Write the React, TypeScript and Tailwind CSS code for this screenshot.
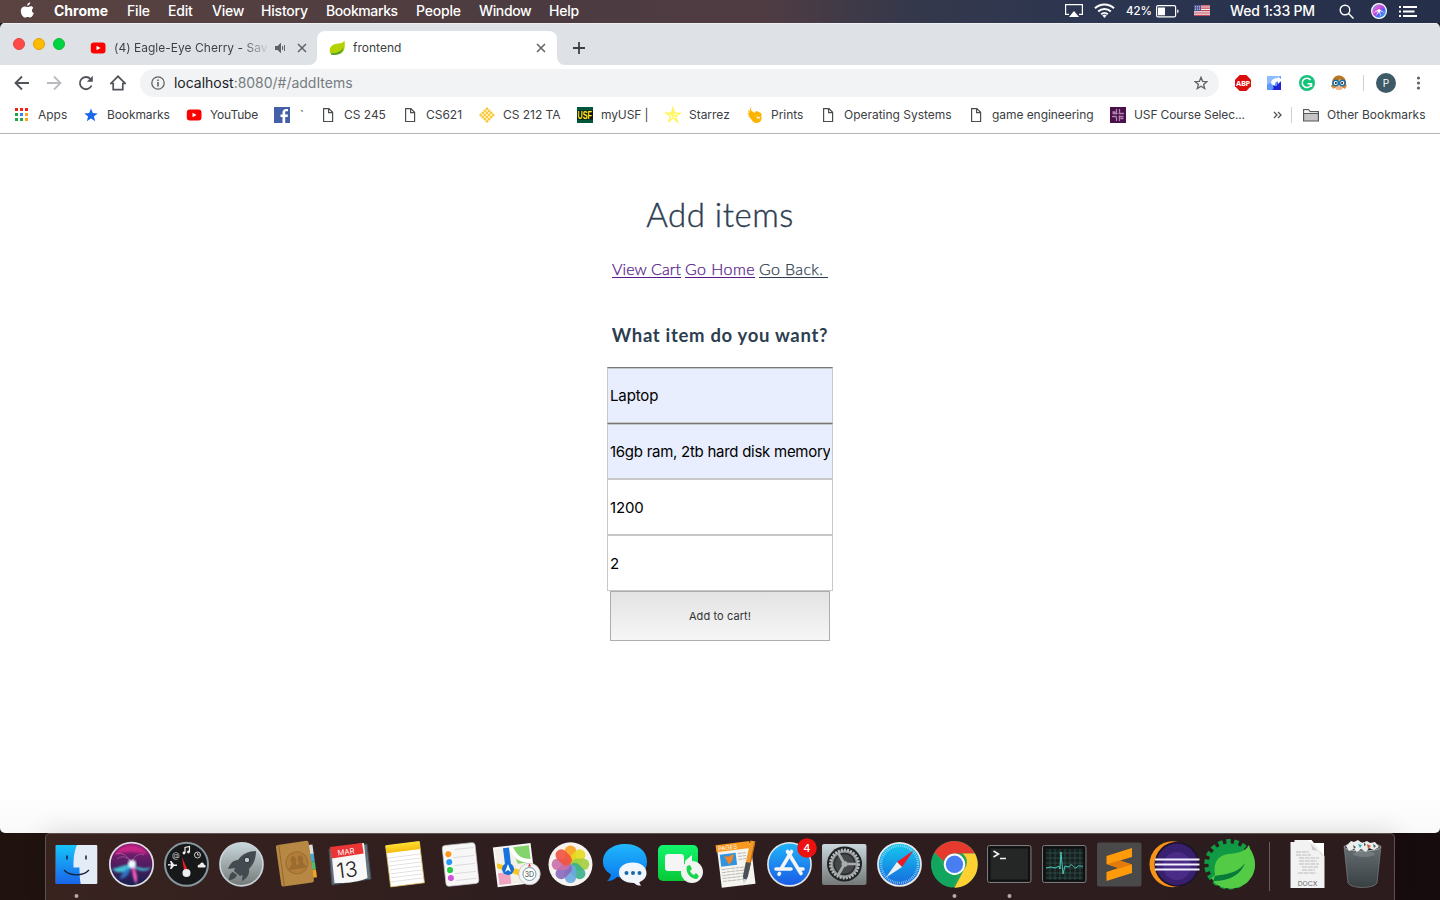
import type { ReactNode } from "react";

const menus = [
  { t: "Chrome", c: "w-[73px] font-bold tracking-[0px]" },
  { t: "File", c: "w-[41px]" },
  { t: "Edit", c: "w-[44px]" },
  { t: "View", c: "w-[49px]" },
  { t: "History", c: "w-[65px]" },
  { t: "Bookmarks", c: "w-[90px] tracking-[-0.4px]" },
  { t: "People", c: "w-[63px]" },
  { t: "Window", c: "w-[70px] tracking-[-0.35px]" },
  { t: "Help", c: "w-[40px]" },
];

function MenuBar() {
  return (
    <header className="flex h-[23px] shrink-0 items-center bg-[linear-gradient(90deg,#5a4341_0%,#4b3b40_38%,#4f3c42_53%,#35384b_63%,#2c3650_75%,#262f49_100%)] pb-[2px] text-[14px] font-medium leading-[22px] tracking-[-0.2px] text-white">
      <svg className="ml-5 mr-[19px] h-[17px] w-[15px] shrink-0" viewBox="0 0 15 17" fill="#fff">
        <path d="M10.200 0.300c.1 1.600-1.300 3.400-3 3.500C7 2.200 8.400.6 10.200.3zM13.300 5.900c-1.900 1.300-1.700 4.200.6 5.200-.7 2-2.100 4.500-3.600 4.500-1 0-1.400-.6-2.600-.6s-1.600.6-2.500.6C3 15.600.8 11.800.8 8.900c0-3 1.900-4.500 3.800-4.500 1.200 0 2.100.7 3 .7.800 0 1.900-.8 3.300-.8 1 0 2 .6 2.400 1.600z" />
      </svg>
      <nav className="flex whitespace-nowrap">
        {menus.map((m) => (
          <span key={m.t} className={m.c}>{m.t}</span>
        ))}
      </nav>
      <div className="ml-auto flex h-full items-center whitespace-nowrap">
        <svg className="h-[15px] w-[18px]" viewBox="0 0 18 15" fill="none" stroke="#fff" strokeWidth="1.200">
          <path d="M4 11.400H.6V1.600h16.800v9.800H14" /><path d="M9 8l5 6H4z" fill="#fff" stroke="none" />
        </svg>
        <svg className="ml-[11px] h-[15px] w-[21px]" viewBox="0 0 21 15" fill="none" stroke="#fff" strokeWidth="2">
          <path d="M1 5.300a13.600 13.600 0 0 1 19 0M4.200 8.500a9 9 0 0 1 12.600 0M7.200 11.300a4.800 4.800 0 0 1 6.600 0" /><path d="M8.400 12.600a3 3 0 0 1 4.200 0L10.500 15z" fill="#fff" stroke="none" />
        </svg>
        <span className="ml-[11px] w-[30px] text-[11.500px] tracking-[-0.1px]">42%</span>
        <svg className="mt-[1px] h-[13px] w-[23px]" viewBox="0 0 23 13" fill="none" stroke="#fff">
          <rect x=".6" y=".6" width="19" height="11.300" rx="1.500" strokeWidth="1.200" /><path d="M2 2.500h7v7.800H2z" fill="#fff" stroke="none" /><path d="M21.200 4.200v4l1.300-1V5.200z" fill="#fff" stroke="none" />
        </svg>
        <svg className="ml-[15px] h-[11px] w-4" viewBox="0 0 16 11">
          <path fill="#f1eef0" d="M0 0h16v11H0z" /><path d="M0 .8h16M0 3.200h16M0 5.600h16M0 8h16M0 10.400h16" stroke="#c34653" strokeWidth="1.200" /><path fill="#4d5a91" d="M0 0h7v6H0z" /><path d="M1 1.500h6M1 3h6M1 4.500h6" stroke="#d5d8ec" strokeWidth=".7" strokeDasharray="1 1" />
        </svg>
        <span className="ml-5 w-[109px]">Wed 1:33 PM</span>
        <svg className="mt-[2px] h-[15px] w-[15px]" viewBox="0 0 15 15" fill="none" stroke="#fff" strokeWidth="1.400"><circle cx="6" cy="6" r="4.800" /><path d="M9.500 9.500l5 5" /></svg>
        <svg className="ml-[17px] mt-px h-4 w-4" viewBox="0 0 16 16">
          <defs><linearGradient id="ms" x2="1" y2="1"><stop stopColor="#57c5ff" /><stop offset=".4" stopColor="#df4cd0" /><stop offset=".6" stopColor="#5a5bff" /><stop offset="1" stopColor="#11d5d0" /></linearGradient></defs>
          <circle cx="8" cy="8" r="7.400" fill="url(#ms)" stroke="#fff" strokeWidth="1.200" /><path d="M2 10l6-4 6 4-5-2 1 6-2-5-3 4 2-5z" fill="#fff" />
        </svg>
        <svg className="ml-3 mr-[23px] mt-px h-[13px] w-[18px]" viewBox="0 0 18 13" stroke="#fff" strokeWidth="1.900"><path d="M0 2h2M4 2h14M0 6.500h2M4 6.500h11.500M0 11h2M4 11h14" /></svg>
      </div>
    </header>
  );
}

function YouTube() {
  return <svg className="h-4 w-4" viewBox="0 0 16 16"><rect x=".8" y="2.500" width="14.700" height="11" rx="3" fill="#f00" /><path d="M6.500 5.700v4.600l4-2.300z" fill="#fff" /></svg>;
}
function Close() {
  return <svg className="h-[10px] w-[10px]" viewBox="0 0 10 10" stroke="#5f6368" strokeWidth="1.500"><path d="M1 1l8 8M9 1L1 9" /></svg>;
}

function TabStrip() {
  return (
    <div className="flex h-[42px] border-t border-[#eceef1] bg-[#dee1e6] text-[12px] text-[#3c4043]">
      <div className="flex w-[309px] items-center pt-[7px]">
        <div className="-mt-2 ml-[13px] flex gap-2">
          <i className="h-3 w-3 rounded-full border border-[#e0443e] bg-[#ff4a48]" />
          <i className="h-3 w-3 rounded-full border border-[#e0a100] bg-[#fdbc03]" />
          <i className="h-3 w-3 rounded-full border border-[#0dbb36] bg-[#00d442]" />
        </div>
        <span className="ml-[25px]"><YouTube /></span>
        <span className="ml-2 w-[153px] whitespace-nowrap bg-[linear-gradient(90deg,#3c4043_128px,#dee1e6_156px)] bg-clip-text tracking-[0.02px] text-transparent">(4) Eagle-Eye Cherry - Save</span>
        <svg className="ml-[8px] mr-[11px] h-3 w-[11px] shrink-0" viewBox="0 0 11 12"><path d="M0 4h2.500L6 .8v10.400L2.500 8H0z" fill="#5f6368" /><path d="M7.500 4v4M9.500 3v6" stroke="#5f6368" /></svg>
        <Close />
      </div>
      <svg className="mt-auto h-2 w-2 shrink-0" viewBox="0 0 8 8"><path d="M8 0v8H0a8 8 0 0 0 8-8z" fill="#fff" /></svg>
      <div className="mt-[7px] flex w-[240px] items-center rounded-t-[8px] bg-white pl-3">
        <Leaf />
        <span className="ml-2 flex-1 tracking-[0.02px]">frontend</span>
        <span className="mr-[11px]"><Close /></span>
      </div>
      <svg className="mt-auto h-2 w-2 shrink-0" viewBox="0 0 8 8"><path d="M0 0v8h8a8 8 0 0 1-8-8z" fill="#fff" /></svg>
      <svg className="ml-2 mt-[18px] h-3 w-3" viewBox="0 0 12 12" stroke="#3c4043" strokeWidth="1.800"><path d="M6 0v12M0 6h12" /></svg>
    </div>
  );
}

function Leaf() {
  return (
    <svg className="h-4 w-4" viewBox="0 0 16 16">
      <path d="M15.500.5c.9 6.500.2 11-3.500 13-3 1.700-7 1.200-9.800 1C-.5 11 .3 6.500 5 4.500 9 3.200 13.500 4 15.500.5z" fill="#b5d200" />
      <path d="M2 13.200c5 .5 10-1.500 12.500-6C14 12 11 15.500 2 14.800z" fill="#4a9d3c" />
    </svg>
  );
}

function Toolbar() {
  return (
    <div className="flex h-9 items-center bg-white">
      <svg className="ml-[14px] h-4 w-4" viewBox="0 0 16 16" fill="none" stroke="#505357" strokeWidth="1.800"><path d="M15 8H2M8 1.500L1.500 8 8 14.500" /></svg>
      <svg className="ml-4 h-4 w-4" viewBox="0 0 16 16" fill="none" stroke="#b9bbbe" strokeWidth="1.800"><path d="M1 8h13M8 1.500L14.500 8 8 14.500" /></svg>
      <svg className="ml-4 h-4 w-4" viewBox="0 0 16 16" fill="none" stroke="#505357" strokeWidth="1.800"><path d="M13.600 10.500A6.100 6.100 0 1 1 12.500 4" /><path d="M14.800.8v6H8.800z" fill="#505357" stroke="none" /></svg>
      <svg className="ml-4 h-4 w-4" viewBox="0 0 16 16" fill="none" stroke="#505357" strokeWidth="1.700"><path d="M.8 8.500L8 1.300l7.200 7.200h-2.400v6.200H3.200V8.500z" /></svg>
      <div className="ml-[14px] flex h-7 w-[1079px] items-center rounded-full bg-[#f1f3f4] pl-[11px] pr-[11px]">
        <svg className="h-[14px] w-[14px]" viewBox="0 0 14 14" fill="none" stroke="#5f6368" strokeWidth="1.300"><circle cx="7" cy="7" r="6.200" /><path d="M7 6v4.500M7 3.500v1.400" strokeWidth="1.600" /></svg>
        <span className="ml-[9px] flex-1 pb-px text-[14px] tracking-[-0.02px] text-[#767c81]"><span className="text-[#202124]">localhost</span>:8080/#/addItems</span>
        <svg className="h-[14px] w-[14px]" viewBox="0 0 14 14" fill="none" stroke="#5f6368" strokeWidth="1.300"><path d="M7 1.300l1.600 4 4.300.3-3.300 2.800 1.100 4.200L7 10.300l-3.700 2.300 1.100-4.200L1.100 5.600l4.300-.3z" /></svg>
      </div>
      <svg className="ml-4 h-4 w-4" viewBox="0 0 16 16"><path d="M4.700 0h6.600L16 4.700v6.600L11.300 16H4.700L0 11.300V4.700z" fill="#db0d0d" /><text x="8" y="10.700" textAnchor="middle" fill="#fff" fontSize="7.400" fontWeight="700" fontFamily="Open Sans" letterSpacing="-.3">ABP</text></svg>
      <svg className="ml-4 h-4 w-4" viewBox="0 0 16 16"><path fill="#5d96ff" d="M0 1h14v14H0z" /><path fill="#8fbcff" d="M0 1h14L0 10z" /><path d="M14 7v8H5c2-1 2-3 1-4l4 0 1-5z" fill="#2222cf" /><path d="M4 7c1-3 4-4 7-4V1.500L15 5l-4 4V6.500c-2 0-3 1-3 3.500H6C4.500 9.500 4 8.500 4 7z" fill="#fff" /></svg>
      <svg className="ml-4 h-4 w-4" viewBox="0 0 16 16"><circle cx="8" cy="8" r="8" fill="#15c279" /><path d="M11.700 5a4.700 4.700 0 1 0 .8 4M8.500 8.800h4V12" stroke="#fff" strokeWidth="1.500" fill="none" /></svg>
      <svg className="ml-4 h-4 w-4" viewBox="0 0 16 16"><path d="M1 10C0-2 14-2 15 7v5h-2V8H3l-1 4H0z" fill="#b87722" /><path d="M3 6c4 1 6-2 6-2l4 3v5l-3 3H6l-3-3z" fill="#f3b583" /><path d="M0 10h3l2 2-3 2zM16 10h-3l-2 2 3 2z" fill="#d58433" /><circle cx="4.700" cy="8" r="2.700" fill="#fff" stroke="#1471af" strokeWidth="1.500" /><circle cx="11.300" cy="8" r="2.700" fill="#fff" stroke="#1471af" strokeWidth="1.500" /><circle cx="4.900" cy="8" r=".9" /><circle cx="11.100" cy="8" r=".9" /></svg>
      <span className="ml-4 h-4 w-px bg-[#cfd1d4]" />
      <span className="ml-3 flex h-5 w-5 items-center justify-center rounded-full bg-[#3d5a66] text-[10px] text-white">P</span>
      <svg className="ml-5 h-[14px] w-[5px]" viewBox="0 0 4 14" fill="#5f6368"><circle cx="2" cy="2" r="1.600" /><circle cx="2" cy="7" r="1.600" /><circle cx="2" cy="12" r="1.600" /></svg>
    </div>
  );
}

const icon = (children: ReactNode) => <svg className="h-4 w-4 shrink-0 overflow-visible" viewBox="0 0 16 16">{children}</svg>;
const doc = icon(<path d="M3.600 1.600h5.300l3.700 3.700v9.200h-9zM8.600 1.600v4h4" fill="none" stroke="#4a4d50" strokeWidth="1.200" />);

const bookmarks = [
  { t: "Apps", c: "w-[69px]", i: icon(<>{["#ea2315", "#f4261c", "#ea2315", "#20a84a", "#2d83f8", "#f7a917", "#20a84a", "#20a84a", "#f7a917"].map((f, n) => <path key={n} fill={f} d={`M${1 + (n % 3) * 5} ${1 + Math.floor(n / 3) * 5}h3v3h-3z`} />)}</>) },
  { t: "Bookmarks", c: "w-[103px] tracking-[-0.1px]", i: icon(<path fill="#1a68e8" d="M8 1.500l1.800 4.600 4.900.3-3.800 3.100 1.300 4.700L8 11.600l-4.200 2.600 1.300-4.700-3.800-3.100 4.900-.3z" />) },
  { t: "YouTube", c: "w-[90px] tracking-[-0.15px]", i: <YouTube /> },
  { t: "`", c: "w-[44px]", i: icon(<g transform="translate(-2 0)"><path fill="#4460a9" d="M0 0h16v16H0z" /><path fill="#fff" d="M8.500 16V10h-2V7.500h2V5.500C8.500 3.300 10 2 12 2h2v2.300h-1.500c-1 0-1.300.5-1.300 1.300v1.900H14l-.4 2.500h-2.400v6z" /></g>) },
  { t: "CS 245", c: "w-[82px]", i: doc },
  { t: "CS621", c: "w-[77px]", i: doc },
  { t: "CS 212 TA", c: "w-[98px]", i: icon(<><path fill="#f8c945" d="M8 0l8 8-8 8-8-8z" /><path d="M4 4l8 8M12 4l-8 8M2 6l8 8M6 2l8 8M2 10l8-8M6 14l8-8" stroke="#fff2bd" strokeWidth=".9" /></>) },
  { t: "myUSF |", c: "w-[88px] tracking-[-0.12px]", i: icon(<><path fill="#00573b" d="M0 0h16v16H0z" /><path fill="#111" d="M0 3.500h16v9H0z" /><text transform="translate(.6 11.900) scale(.72 1)" x="0" y="0" fontSize="10" fontWeight="700" fill="#fff01f" fontFamily="Liberation Sans">USF</text></>) },
  { t: "Starrez", c: "w-[82px]", i: icon(<path fill="none" stroke="#fff55c" strokeWidth="1.400" d="M8 1l1.500 5 5.500.3-4.500 3 2 5.500L8 11l-4.500 4 2-5.500L1 6l5.500.3zM5 7l6 2M8 3v8" />) },
  { t: "Prints", c: "w-[73px]", i: icon(<path fill="#fdb400" d="M4.500 0c-1 2-.7 3.500 1 4.500L7.500 6l.5-1.500 2.500-.3 4 2.300v5c0 3-3 4.500-5 4.500-3 0-4-2-5.500-4C3 10.500 1.500 10 1 9l2 .5C1.500 8 .7 7 .5 5.500l2 1.500C1.500 5 1.200 3.800 1.500 2.500L3.200 5C2.700 2.500 3 1 4.500 0zM9 9l1.500 2.500h2l1-2-2 .8z" fillRule="evenodd" />) },
  { t: "Operating Systems", c: "w-[148px]", i: doc },
  { t: "game engineering", c: "w-[142px] tracking-[-0.06px]", i: doc },
  { t: "USF Course Selec...", c: "w-[163px] tracking-[-0.12px]", i: icon(<><path fill="#4b1049" d="M0 0h16v16H0z" /><path d="M6.500 2.500v4.500M9.500 2.500v3M3 6.500h4M9 6.500h4.500M2.500 9.500H6M9 9.500h4M6.500 10v3.500M9.500 9v4.500M3 5h2M11 11.500h2" stroke="#b184b4" strokeWidth="1.300" strokeLinecap="round" fill="none" /></>) },
];

function BookmarksBar() {
  return (
    <div className="flex h-[33px] items-center border-b border-[#b5b5b6] bg-white pb-[5px] pl-[14px] text-[12px] tracking-[-0.02px] text-[#3c4043]">
      {bookmarks.map((b) => (
        <div key={b.t} className={`flex shrink-0 items-center gap-2 whitespace-nowrap ${b.c}`}>{b.i}<span>{b.t}</span></div>
      ))}
      <svg className="h-2 w-[9px]" viewBox="0 0 9 8" fill="none" stroke="#505357" strokeWidth="1.300"><path d="M1 1l3 3-3 3M5 1l3 3-3 3" /></svg>
      <span className="ml-[9px] h-4 w-px bg-[#cfd1d4]" />
      <svg className="ml-[11px] h-[14px] w-4 shrink-0" viewBox="0 0 16 14"><path d="M.6 13V1.600h5l1.500 2h8.300V13z" fill="#c6c6c7" stroke="#55585b" strokeWidth="1.200" /><path d="M1.200 2.200h4.200l1.500 2h7.900v1.300H1.200z" fill="#f5f5f5" /><path d="M1 5.500h14" stroke="#55585b" /></svg>
      <span className="ml-2 whitespace-nowrap">Other Bookmarks</span>
    </div>
  );
}

function Page() {
  return (
    <main className="flex flex-1 flex-col items-center bg-[linear-gradient(#fff_calc(100%-40px),#f9f9f9)] font-[Lato,sans-serif] text-[#2c3e50]">
      <h1 className="mt-[58px] text-[33px] font-light leading-[44px] tracking-[0.5px] [-webkit-text-stroke:0.4px_#2c3e50]">Add items</h1>
      <nav className="mt-[21px] flex gap-[4px] text-[16px] font-light leading-6 [-webkit-text-stroke:0.25px_currentColor]">
        <a className="w-[69px] whitespace-nowrap tracking-[0.08px] text-[#551a8b] underline decoration-[#551a8b] underline-offset-2">View Cart</a>
        <a className="w-[70px] whitespace-nowrap tracking-[0.45px] text-[#551a8b] underline decoration-[#551a8b] underline-offset-2">Go Home</a>
        <a className="w-[69px] whitespace-pre tracking-[0.35px] underline underline-offset-2">{"Go Back. "}</a>
      </nav>
      <h3 className="mt-[40px] text-[18.500px] font-bold leading-7 tracking-[0.68px]">What item do you want?</h3>
      <form className="mt-[18px] flex w-[226px] flex-col items-center font-[Inter,sans-serif] text-[15px] tracking-[-0.13px] text-black">
        <div className="flex h-14 w-full items-center border border-[#c8c8c8] border-t-[#777] bg-[#e8eefe] px-[2px] pt-[3px] shadow-[inset_0_1px_0_#c4c6cc]">Laptop</div>
        <div className="flex h-14 w-full items-center border border-[#c8c8c8] border-t-[#777] bg-[#e8eefe] px-[2px] pt-[3px] shadow-[inset_0_1px_0_#c4c6cc]"><span className="overflow-hidden whitespace-nowrap tracking-[-0.27px]">16gb ram, 2tb hard disk memory</span></div>
        <div className="flex h-14 w-full items-center border border-[#c8c8c8] px-[2px] pt-[3px]">1200</div>
        <div className="flex h-14 w-full items-center border border-[#c8c8c8] px-[2px] pt-[3px]">2</div>
        <button type="button" className="h-[50px] w-[220px] border border-[#adadad] bg-linear-to-b from-[#e3e3e3] to-[#f6f6f6] text-[11px] tracking-[0.1px] text-[#333]">Add to cart!</button>
      </form>
    </main>
  );
}

const petals = ["#f9a11b", "#e7dc1d", "#a3cf3e", "#39b08a", "#69a8df", "#8a68bd", "#cb6fa8", "#ef5340"];
const rot = (n: number, step: number) => `rotate(${n * step} 27.500 31.300)`;

const dock: { run?: boolean; art: ReactNode }[] = [
  { run: true, art: <><rect x="6.800" y="12" width="41.500" height="39" rx="1" fill="#e4ecf7" /><path d="M6.800 12H28c-3 7-3.500 13-3.500 22.500h6c0 6 .3 11 1.200 16.500H6.800z" fill="url(#fb)" /><path d="M18 22.500v4M37 22.500v4" stroke="#123" strokeWidth="1.500" /><path d="M15 37c6 6.500 19 6.500 25 0" fill="none" stroke="#122238" strokeWidth="1.300" /></> },
  { art: <><circle cx="27.500" cy="31.300" r="21.700" fill="url(#siri)" stroke="#dfe0e6" strokeWidth="1.700" /><g filter="url(#soft)"><path d="M10 22c8-14 28-13 34 0-10-4-24-4-34 0z" fill="#e0268f" opacity=".75" /><path d="M8 36c5-1 12-4 19-5 7 4 14 6 20 3-4 6-12 4-18 0-7 5-15 8-21 2z" fill="#43dfe6" opacity=".85" /><path d="M27 31c2 6 1 13 5 20 3-6-1-14-3-20z" fill="#ff61c2" /><path d="M27 31c-5 4-10 9-11 15 8-1 11-8 11-15z" fill="#2d91e8" opacity=".7" /></g><path d="M13 26c6-5 12-1 15 5 0-6 6-12 12-9M28 31c-4-9-11-12-16-10" stroke="#d993dc" fill="none" strokeWidth=".8" opacity=".5" /><circle cx="28" cy="31" r="4" fill="#e9ffff" filter="url(#soft)" /></> },
  { art: <><circle cx="27.500" cy="31.300" r="21.500" fill="#171819" stroke="#87969d" strokeWidth="2" /><path d="M23 24l6.500 15-4 1z" fill="#f41c20" /><circle cx="27.500" cy="40" r="4" fill="#eee" /><g fill="#eee"><path d="M9 31l3 .2L11 28h1.500l2.500 3.500h3v1.500h-3L12.500 36H11l1-3.500H9z" /><path d="M39 34.500c-1-2.500 1-3 2-3 1-3 4-2 4 0 2 0 2 3 1 3z" /></g><path d="M26 20v-5.500l4.500-1V19" fill="none" stroke="#eee" strokeWidth="1.200" /><circle cx="25" cy="20" r="1.400" fill="#eee" /><circle cx="29.500" cy="19" r="1.400" fill="#eee" /><circle cx="38.500" cy="22" r="3" fill="none" stroke="#ccc" /><path d="M38.500 20v2h2" stroke="#ccc" fill="none" /><text x="13" y="25" fill="#ccc" fontSize="8">@</text></> },
  { art: <><circle cx="27.500" cy="31.300" r="21.500" fill="url(#silver)" stroke="#c9d2d6" strokeWidth="1.700" /><path d="M42 18c-7 0-14 3-18 9-5 0-8 4-10 9l7-1-1 3 6 5 2.500-1-.5 6c4-2 8-6 7-12 5-5 7-11 7-18z" fill="#434a50" /><circle cx="33" cy="27" r="2.800" fill="#c3ced2" stroke="#252c31" /><path d="M19 39c-3 1-4 5-4 8.500 3-1 7-2 8-5.500z" fill="#434a50" /></> },
  { art: <g transform="rotate(-8 27 31)"><path d="M42 14h4v10h-4z" fill="#ddd" /><path d="M42 23h4v8h-4z" fill="#46a7d1" /><path d="M42 31h4v8h-4z" fill="#51bb70" /><path d="M42 39h4v8h-4z" fill="#f0a523" /><rect x="9.500" y="9.500" width="33" height="42" rx="2" fill="#b78844" /><path d="M12.500 10v41" stroke="#94682e" /><circle cx="28" cy="30" r="11" fill="#b17d38" stroke="#9b6f33" /><path d="M19 36c1-4 4-3 4-6-2-4 0-7 2-7s4 4 2 7c0 3 3 2 3 6M27 36c0-4 3-3 3-6-2-4 0-7 2-7s4 4 2 7c0 3 3 2 3 6" fill="#9a6c30" /></g> },
  { art: <><path d="M6 16l38-5 4 35-39 6z" fill="#65717b" stroke="#424a53" /><path d="M8 15l33-5 3.500 35c-12 5-23 5-33 5z" fill="#f8f8f8" /><path d="M7 14l32-4 1.700 10.500-32 5z" fill="#eb3434" /><text x="15" y="22.500" transform="rotate(-7 15 22)" fontSize="7.500" fill="#fff">MAR</text><text x="14.500" y="45.500" transform="rotate(-7 14 45)" fontSize="21" fontWeight="300" fill="#222" letterSpacing="0">13</text></> },
  { art: <g transform="rotate(-7 27 31)"><path d="M10 11h34v41H10z" fill="#fff" stroke="#d6ba63" strokeWidth=".8" /><path d="M10 10h34v8H10z" fill="url(#notes)" /><path d="M11 23h32M11 27h32M11 31h32M11 35h32M11 39h32M11 43h32M11 47h32" stroke="#ddd" strokeWidth=".8" /></g> },
  { art: <g transform="rotate(-6 27 31)"><rect x="11" y="11" width="33" height="41" rx="3" fill="#f7f7f7" stroke="#c6c6c6" strokeWidth=".7" />{["#ff9417", "#2599f5", "#20cf43", "#d352db"].map((f, i) => <circle key={f} cx="16.500" cy={20 + i * 8} r="3" fill={f} />)}<path d="M23 16h19M21 24h21M21 32h21M21 40h21M21 47h21" stroke="#d5d5d5" strokeWidth=".8" /></g> },
  { art: <><g transform="rotate(-7 27 31)"><path d="M8 13h36v38H8z" fill="#f3f0e9" stroke="#f7f7f7" strokeWidth="2" /><path d="M25 14h18v17H30z" fill="#83d46b" /><path d="M9 28l33 14v7L9 33z" fill="#ffc51a" /><path d="M9 38h12v12H9z" fill="#efa5bf" /><path d="M17 14h6v21h-6z" fill="#1773dd" /><path d="M25 14c4 13 10 15 19 16" fill="none" stroke="#fff" strokeWidth="4" /></g><circle cx="20" cy="36" r="6" fill="#1670d9" /><path d="M20 31l-3 8 3-2 3 2z" fill="#fff" /><circle cx="41.500" cy="41" r="10.800" fill="#f4f4f4" stroke="#b9b9b9" strokeWidth=".7" /><circle cx="41.500" cy="41" r="6.500" fill="#fff" stroke="#6d99a8" /><text x="41.500" y="43.700" textAnchor="middle" fontSize="7" fill="#444">3D</text><path d="M41.500 30.500l1.500 3h-3z" fill="#e12222" /></> },
  { art: <><circle cx="27.500" cy="31.300" r="22" fill="#f5f4f0" />{petals.map((p, n) => <rect key={p} x="21.700" y="12.500" width="11.600" height="18.500" rx="5.800" fill={p} opacity=".9" transform={rot(n, 45)} />)}</> },
  { art: <><path d="M27.500 11C14 11 5 18.500 5 28.500c0 6 3 10 8 13-.5 3-2 5-4 6.500 5 0 8-2 10-4 22 3 30-4 30-15.500C49 18 40 11 27.500 11z" fill="url(#msg)" /><path d="M35 29.500c-9 0-14 4.500-14 10 0 6 5 10.500 15 10.500 2 2 5 3 7.500 2.500-1.500-1-2-2-2-3.500 5-2 7-5 7-9 0-6-5.500-10.500-13.500-10.500z" fill="#f0f6fc" /><circle cx="28.500" cy="40" r="2" fill="#1768a8" /><circle cx="35" cy="40" r="2" fill="#1768a8" /><circle cx="41.500" cy="40" r="2" fill="#1768a8" /></> },
  { art: <><rect x="5" y="12" width="40" height="36" rx="5" fill="url(#green)" /><rect x="12" y="21" width="19" height="17" rx="3" fill="#f5f5f5" /><path d="M32 28l7-6v14l-7-4z" fill="#f5f5f5" /><circle cx="39" cy="39" r="11" fill="#f3f4f2" /><path d="M34 33l3-1 2 4-2 2c1 2 2 3 4 4l2-2 3 3-2 3c-7 0-12-7-10-13z" fill="#16d64b" /></> },
  { art: <g transform="rotate(-7 27 31)"><path d="M11 12h34v41H11z" fill="#f5f4ef" /><path d="M10 10h34v7H10z" fill="#f9981d" /><text x="12" y="16" fontSize="6" fill="#fff">PAGES</text><path d="M13 20h16v12H13z" fill="#3294dc" /><path d="M17 22l4 1 6-2-2 6-4 4-2-5z" fill="#f18427" /><path d="M31 21h8M31 24h8M31 27h8M13 35h25M13 38h25M13 41h25M13 44h25M13 47h20" stroke="#b9b9b9" strokeWidth="1" strokeDasharray="4 .6" /><g transform="rotate(19 40 31)"><path d="M38 9h5v30h-5z" fill="#f29a23" /><path d="M42 9h1v29h-1z" fill="#b8651a" /><path d="M38 31h5v14l-1.500 5h-2L38 45z" fill="#48515a" /><path d="M39 48h3l-1.500 7z" fill="#d8dee1" /></g></g> },
  { art: <><circle cx="27.500" cy="31.300" r="21.600" fill="url(#store)" stroke="#e3e5e6" strokeWidth="1.600" /><path d="M29.500 18.500L19 36M25.500 18.500L39 40.500M14 36h15M37 36h4M17.500 40.500l-.5.800" stroke="#f5f5f5" strokeWidth="3.600" strokeLinecap="round" /><circle cx="45" cy="15" r="9.800" fill="#ed1111" /><text x="45" y="19" textAnchor="middle" fontSize="11" fontWeight="500" fill="#fff">4</text></> },
  { art: <><rect x="5" y="11" width="44.500" height="41" rx="2" fill="url(#silver)" /><circle cx="27.500" cy="31" r="17.500" fill="#1f2223" /><circle cx="27.500" cy="31" r="14" fill="#8b8f91" stroke="#b7babc" strokeWidth="3" strokeDasharray="1.900 1.200" /><circle cx="27.500" cy="31" r="10.500" fill="#454849" stroke="#292b2d" strokeWidth="1.500" /><path d="M27.500 31h12M27.500 31l-6-10.500M27.500 31l-6 10.500" stroke="#a9acae" strokeWidth="2.600" /><circle cx="27.500" cy="31" r="3" fill="#a9acae" /></> },
  { art: <><circle cx="27.500" cy="31.300" r="21.500" fill="url(#safari)" stroke="#e5e7e8" strokeWidth="1.800" /><circle cx="27.500" cy="31.300" r="18.500" fill="none" stroke="#bfe4fa" strokeWidth="2.500" strokeDasharray=".6 1.300" /><path d="M41.500 17.500L30 34l-5-5z" fill="#f01923" /><path d="M14 44.500L25 29l5 5z" fill="#edf1f3" /></> },
  { run: true, art: <><circle cx="27.500" cy="31.300" r="23.300" fill="#23a65d" /><path d="M7.300 19.600A23.300 23.300 0 0 1 48 20.500H27.500a10.600 10.600 0 0 0-10.500 7.500z" fill="#e63a2f" /><path d="M48 20.500a23.300 23.300 0 0 1-20.500 34.200l9.600-18.300a10.600 10.600 0 0 0-1.700-15.900z" fill="#ffd032" /><path d="M7.300 19.600l10.900 16.900c3 5 9 6.500 13 5.200l-6.400 12.800A23.300 23.300 0 0 1 7.300 19.600z" fill="#11a55e" /><circle cx="27.500" cy="31.300" r="10.700" fill="#fff" /><circle cx="27.500" cy="31.300" r="8.700" fill="#487ef2" /></> },
  { run: true, art: <><rect x="5.500" y="12.500" width="43.500" height="37" rx="2" fill="#252626" stroke="#7b7e7f" /><path d="M7.500 14.500h39.500v33H7.500z" fill="none" stroke="#101010" strokeWidth="2" /><path d="M11.500 18l5 3-5 3M18 25.500h6" fill="none" stroke="#f2f2f2" strokeWidth="1.600" /></> },
  { art: <><rect x="5.500" y="12.500" width="43.500" height="37" rx="2" fill="#17201f" stroke="#7b7e7f" /><path d="M7.500 14.500h39.500v33H7.500z" fill="none" stroke="#101010" strokeWidth="2" /><path d="M9 20h37M9 25h37M9 30h37M9 35h37M9 40h37M9 45h37M13 16v31M18 16v31M23 16v31M28 16v31M33 16v31M38 16v31M43 16v31" stroke="#315955" strokeWidth=".7" /><path d="M9 35l5-1 4 1 4-2 1 3 1-17 2 22 2-8 4 1c3-6 5 2 7 1 3-4 4-1 7-2" fill="none" stroke="#4ed8c5" strokeWidth=".9" /></> },
  { art: <><rect x="5" y="9.500" width="44.500" height="44" rx="2" fill="#494949" /><path d="M14.500 23l25.500-8v9l-12 3.500 12 4v8.500l-25.500 8v-9l12-4-12-4z" fill="#ff9b0b" /><path d="M27 27.500l13 4-12.500 4-12.500-4.300z" fill="#e37b0c" /></> },
  { art: <><circle cx="25.500" cy="31.300" r="23" fill="#f79418" /><circle cx="30" cy="31.300" r="22.500" fill="#1f1330" /><circle cx="30" cy="31.300" r="20.700" fill="#38206e" /><circle cx="30" cy="33" r="14" fill="#4a2c88" /><path d="M8 26.500h44.500M8 31.500h44.500M8 36.500h44.500" stroke="#f4f0ff" strokeWidth="2" /></> },
  { art: <><circle cx="28.500" cy="31.300" r="22.500" fill="none" stroke="#119a44" strokeWidth="5.500" strokeDasharray="4.500 3.354" /><circle cx="28.500" cy="31.300" r="21" fill="#0f9a43" /><path d="M48.500 15C57 27 55.500 41 46 49.500c-9.500 8-23 8-32.500.5l-3-5z" fill="#54cb45" /><path d="M15 46c-4-14 0-23 12-25 9-1 16-1 21-9 4 12 2 22-5 30-9 6-18 6-28 4z" fill="#54cb45" /><path d="M14 43c10-2 22-2 30-13-4 11-14 18-32 18z" fill="#087a3a" /></> },
];

function Dock() {
  return (
    <footer className="flex h-[67px] shrink-0 bg-[linear-gradient(90deg,#20130f,#251718_50%,#160b0d)] px-[45px]">
      <div className="flex w-[1350px] rounded-t-[5px] border-x border-t border-[#5c5050] bg-[linear-gradient(90deg,#38231f,#2f1e1f_35%,#2c1c1d)] pl-[3px] shadow-[0_-2px_24px_rgba(0,0,0,0.12)]">
        {dock.map((d, n) => (
          <svg key={n} className="-mt-px h-[67px] w-[54.880px] shrink-0" viewBox="0 0 54.900 67">
            {d.art}{d.run && <circle cx="27.500" cy="63" r="2" fill="#b7aaaa" />}
          </svg>
        ))}
        <span className="ml-[12.600px] mt-2 h-[49px] w-px bg-[#6a5d5d]" />
        <svg className="-mt-px ml-[10px] h-[67px] w-[55px]" viewBox="0 0 55 67"><path d="M10.500 9h4V7h17l13 16v32h-34z" fill="#f2f2f2" /><path d="M27 7h4l13 16V10H32z" fill="#fff" /><path d="M27 7c5 4 5 8 5 10 6 0 10 3 12 7z" fill="#ccc" /><path d="M16 19h13M16 22h15M19 25h20M19 28h18M19 31h20M22 34h16M22 37h13M18 40h18" stroke="#bbb" strokeDasharray="5 .7" /><text x="27.500" y="52.500" textAnchor="middle" fontSize="6.800" fill="#666">DOCX</text></svg>
        <svg className="-mt-px h-[67px] w-[55px]" viewBox="0 0 55 67"><path d="M9 13h37l-4 37c-3 6-26 6-29 0z" fill="url(#trash)" stroke="#858b8e" strokeWidth=".6" /><ellipse cx="27.500" cy="14" rx="18" ry="4" fill="#25292b" stroke="#a9aeb0" /><path d="M11 13l5-5 3 1 4-2 4 3 5-2 3 2 5-1 4 5-5 3-5-2-3 4-5-3-4 3-3-3-5 2z" fill="#eceeed" /><path d="M23 11l4 1-2 3z" fill="#26b1be" /><path d="M32 11l4 2-3 3z" fill="#c45e35" /><path d="M18 12l3 2-2 2zM29 9l2 3-2 1zM38 11l3 2-2 2z" fill="#555" /><ellipse cx="29" cy="21" rx="11" ry="3" fill="#a9b0b3" opacity=".3" /></svg>
      </div>
    </footer>
  );
}

function Gradients() {
  const g: [string, string, string][] = [["fb", "#16c5fb", "#1a64e9"], ["siri", "#8f1b72", "#14204f"], ["silver", "#c9d7dd", "#747977"], ["notes", "#ffdf36", "#f4bd0b"], ["msg", "#22b7fd", "#0879ed"], ["green", "#12f56c", "#08c837"], ["store", "#20b6f9", "#1a5ae6"], ["safari", "#14cbef", "#1767dd"], ["trash", "#666e72", "#394043"]];
  return (
    <svg className="absolute h-0 w-0">
      <defs>
        {g.map(([id, a, b]) => <linearGradient key={id} id={id} x1="0" y1="0" x2="0" y2="1"><stop stopColor={a} /><stop offset="1" stopColor={b} /></linearGradient>)}
        <filter id="soft"><feGaussianBlur stdDeviation=".8" /></filter>
      </defs>
    </svg>
  );
}

export default function App() {
  return (
    <div className="flex h-[900px] w-[1440px] flex-col overflow-hidden bg-[#251718] font-[Inter,sans-serif]">
      <Gradients />
      <MenuBar />
      <div className="flex h-[810px] shrink-0 flex-col overflow-hidden rounded-[5px]">
        <TabStrip /><Toolbar /><BookmarksBar /><Page />
      </div>
      <Dock />
    </div>
  );
}
